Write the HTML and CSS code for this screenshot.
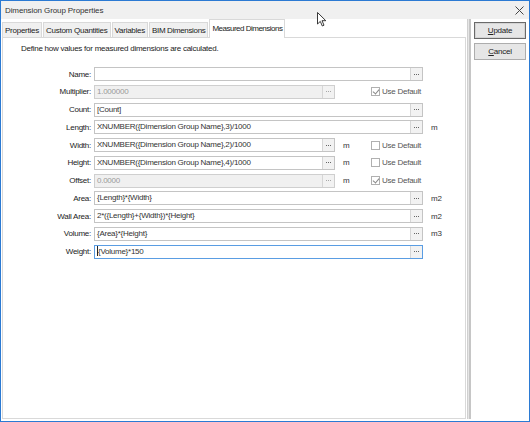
FILE: index.html
```html
<!DOCTYPE html>
<html lang="en">
<head>
  <meta charset="UTF-8">
  <title>Dimension Group Properties</title>
  <link rel="stylesheet" href="styles.css">
</head>
<body>
  <div class="window">
    <div class="titlebar">
      <span class="title">Dimension Group Properties</span>
      <svg class="close" width="9" height="9" viewBox="0 0 9 9"><path d="M0.5 0.5 L8.5 8.5 M8.5 0.5 L0.5 8.5" stroke="#444" stroke-width="1"/></svg>
    </div>
    <div class="main">
      <div class="left">
        <div class="tabs">
          <div class="tab">Properties</div>
          <div class="tab">Custom Quantities</div>
          <div class="tab">Variables</div>
          <div class="tab narrow">BIM Dimensions</div>
          <div class="tab active">Measured Dimensions</div>
        </div>
        <div class="panel">
          <p class="intro">Define how values for measured dimensions are calculated.</p>
          <div class="form">
            <div class="row">
              <label class="lbl">Name:</label>
              <div class="field"><span class="val"></span><span class="dots"><i></i><i></i><i></i></span></div>
            </div>
            <div class="row">
              <label class="lbl">Multiplier:</label>
              <div class="field short disabled"><span class="val">1.000000</span><span class="dots"><i></i><i></i><i></i></span></div>
              <span class="unit"></span>
              <span class="chk checked"></span><span class="chk-text">Use Default</span>
            </div>
            <div class="row">
              <label class="lbl">Count:</label>
              <div class="field"><span class="val">[Count]</span><span class="dots"><i></i><i></i><i></i></span></div>
            </div>
            <div class="row">
              <label class="lbl">Length:</label>
              <div class="field"><span class="val">XNUMBER({Dimension Group Name},3)/1000</span><span class="dots"><i></i><i></i><i></i></span></div>
              <span class="unit">m</span>
            </div>
            <div class="row">
              <label class="lbl">Width:</label>
              <div class="field short"><span class="val">XNUMBER({Dimension Group Name},2)/1000</span><span class="dots"><i></i><i></i><i></i></span></div>
              <span class="unit">m</span>
              <span class="chk"></span><span class="chk-text">Use Default</span>
            </div>
            <div class="row">
              <label class="lbl">Height:</label>
              <div class="field short"><span class="val">XNUMBER({Dimension Group Name},4)/1000</span><span class="dots"><i></i><i></i><i></i></span></div>
              <span class="unit">m</span>
              <span class="chk"></span><span class="chk-text">Use Default</span>
            </div>
            <div class="row">
              <label class="lbl">Offset:</label>
              <div class="field short disabled"><span class="val">0.0000</span><span class="dots"><i></i><i></i><i></i></span></div>
              <span class="unit">m</span>
              <span class="chk checked"></span><span class="chk-text">Use Default</span>
            </div>
            <div class="row">
              <label class="lbl">Area:</label>
              <div class="field"><span class="val">{Length}*{Width}</span><span class="dots"><i></i><i></i><i></i></span></div>
              <span class="unit">m2</span>
            </div>
            <div class="row">
              <label class="lbl">Wall Area:</label>
              <div class="field"><span class="val">2*({Length}+{Width})*{Height}</span><span class="dots"><i></i><i></i><i></i></span></div>
              <span class="unit">m2</span>
            </div>
            <div class="row">
              <label class="lbl">Volume:</label>
              <div class="field"><span class="val">{Area}*{Height}</span><span class="dots"><i></i><i></i><i></i></span></div>
              <span class="unit">m3</span>
            </div>
            <div class="row">
              <label class="lbl">Weight:</label>
              <div class="field focused"><span class="val"><b class="caret"></b>{Volume}*150</span><span class="dots"><i></i><i></i><i></i></span></div>
            </div>
          </div>
        </div>
      </div>
      <div class="sep"></div>
      <div class="side">
        <button class="btn default"><u>U</u>pdate</button>
        <button class="btn"><u>C</u>ancel</button>
      </div>
    </div>
    <!-- mouse pointer over the title bar -->
    <svg class="pointer" width="10" height="15" viewBox="0 0 10 15"><path d="M0.5 0.5 L0.5 12 L3.3 9.4 L5.3 14 L7 13.2 L5 8.7 L8.8 8.7 Z" fill="#fff" stroke="#222" stroke-width="0.9" stroke-linejoin="round"/></svg>
  </div>
</body>
</html>
```

FILE: styles.css
```css
* { margin: 0; padding: 0; box-sizing: border-box; }
html, body { width: 530px; height: 422px; overflow: hidden; background: #fff; }
body { font-family: "Liberation Sans", Arial, sans-serif; font-size: 8px; letter-spacing: -0.25px; color: #222; }

.window {
  position: relative;
  width: 530px; height: 422px;
  border: 1px solid #2b7ad3;
  display: flex; flex-direction: column;
  background: #fff;
}

/* Title bar */
.titlebar {
  height: 18px; flex: none;
  background: #f0f0f0;
  display: flex; align-items: center; justify-content: space-between;
  padding: 0 5px 0 4px;
}
.title { font-size: 8px; letter-spacing: -0.1px; color: #333; }
.close { margin-top: 1px; }

.main { flex: 1; display: flex; min-height: 0; padding-bottom: 2px; }

/* Left: tabs + page */
.left { width: 465px; flex: none; display: flex; flex-direction: column; padding-left: 1px; }
.tabs { height: 18px; flex: none; display: flex; align-items: flex-end; position: relative; z-index: 1; }
.tab {
  height: 15px; padding: 0 2px;
  border: 1px solid #d9d9d9; border-bottom: none; margin-right: 1px;
  background: #f0f0f0; color: #222;
  display: flex; align-items: center;
  white-space: nowrap;
}
.tab.narrow { letter-spacing: -0.35px; }
.tab.active { height: 19px; background: #fff; padding: 0 2px 1px; margin-bottom: -1px; letter-spacing: -0.5px; }

.panel { flex: 1; border: 1px solid #d9d9d9; background: #fff; }
.intro { margin: 6px 0 0 18px; line-height: 10px; color: #222; }

.form { margin-top: 13px; display: flex; flex-direction: column; gap: 3.75px; }
.row { display: flex; align-items: center; height: 14px; }
.lbl { width: 88px; text-align: right; margin-right: 3px; color: #222; white-space: nowrap; }

.field {
  width: 329px; height: 14px;
  border: 1px solid #c4c4c4; background: #fff;
  display: flex; align-items: stretch;
}
.field.short { width: 241px; }
.field.disabled { background: #f0f0f0; border-color: #cfcfcf; }
.field.disabled .val { color: #9a9a9a; }
.field.focused { border-color: #5a9de3; }
.val { flex: 1; padding-left: 2px; line-height: 12px; color: #333; white-space: nowrap; overflow: hidden; }
.caret { display: inline-block; width: 1px; height: 10px; background: #222; vertical-align: -2px; }

.dots {
  width: 12px; flex: none;
  border-left: 1px solid #d6d6d6; background: #f2f2f2;
  display: flex; align-items: center; justify-content: center; gap: 1px;
}
.dots i { width: 1px; height: 1px; background: #666; }
.field.disabled .dots i { background: #a8a8a8; }

.unit { width: 28px; margin-left: 8px; color: #333; }
.chk { width: 9px; height: 9px; border: 1px solid #b0b0b0; background: #fff; position: relative; }
.chk.checked::after {
  content: ""; position: absolute; left: 2px; top: 0px;
  width: 3px; height: 5px;
  border: solid #888; border-width: 0 1px 1px 0;
  transform: rotate(40deg);
}
.chk-text { margin-left: 2px; color: #555; }

/* Separator + buttons */
.sep { width: 4px; flex: none; margin-left: 1px; border-left: 1px solid #d0d0d0; border-right: 2px solid #c6c6c6; background: #e6e6e6; }
.side { flex: 1; display: flex; flex-direction: column; align-items: center; padding-top: 3px; gap: 4px; }
.btn {
  width: 52px; height: 17px;
  font-family: "Liberation Sans", Arial, sans-serif; font-size: 8px; letter-spacing: -0.25px; color: #222;
  background: #e6e6e6; border: 1px solid #adadad;
}
.btn.default { border: 1px solid #6a6a6a; box-shadow: inset 0 0 0 1px #d4d4d4; }

.pointer { position: absolute; left: 316px; top: 11px; }
```
